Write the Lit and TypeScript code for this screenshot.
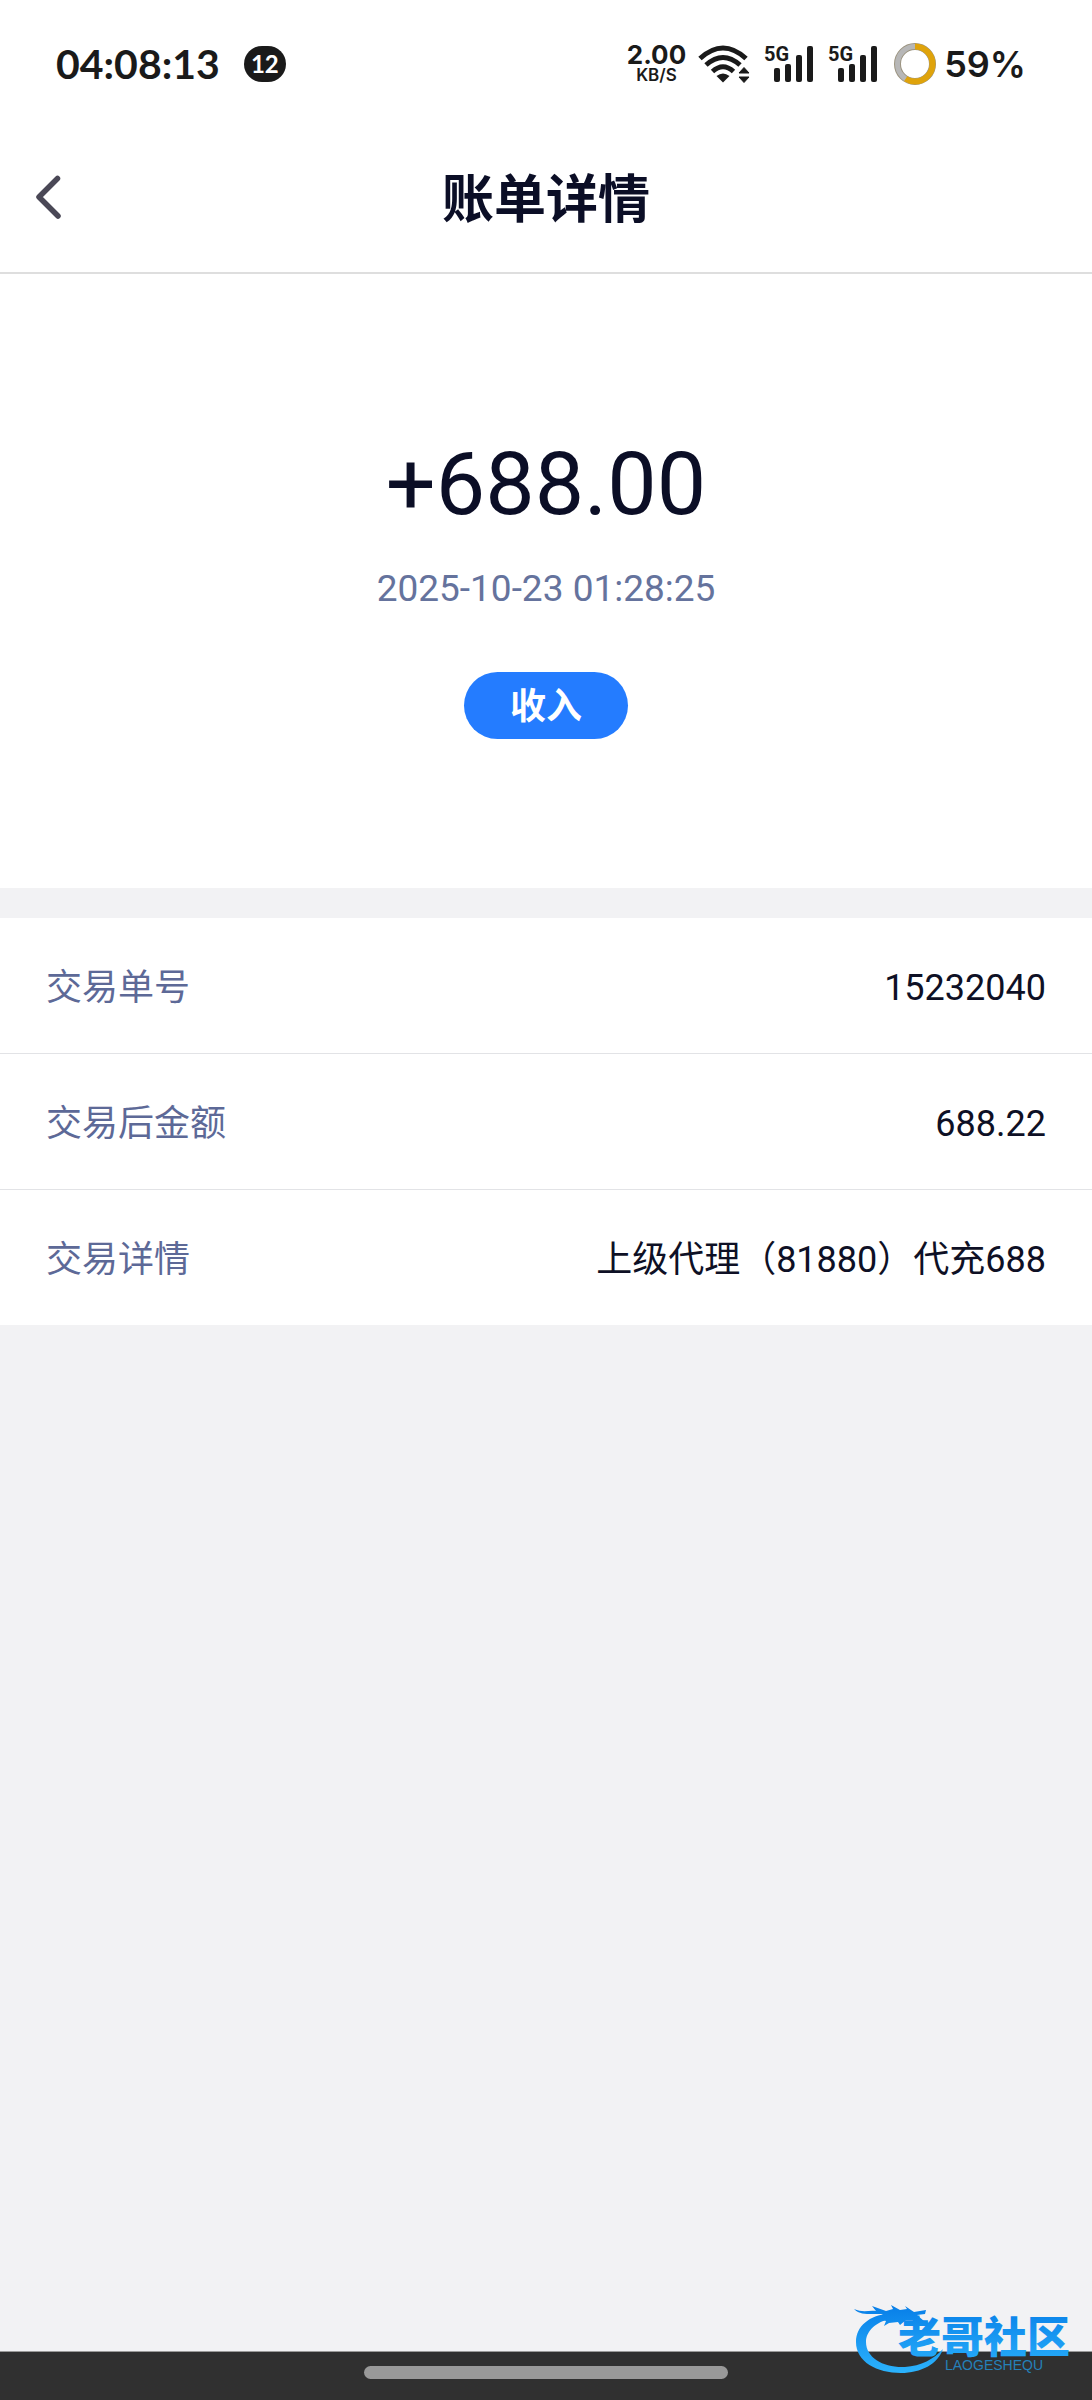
import { LitElement, html, css, svg } from "lit";
import { customElement, property } from "lit/decorators.js";

@customElement("signal-icon")
class SignalIcon extends LitElement {
  static styles = css`
    :host { display: block; }
    .signal { display: block; }
    .net { font: 700 20px Roboto, sans-serif; fill: #1a1a1a; }
  `;
  render() {
    return html`<svg class="signal" width="50" height="40" viewBox="0 0 50 40" role="img" aria-label="5G">
      <text class="net" x="0" y="17">5G</text>
      <g fill="#1a1a1a">
        <rect x="10" y="24" width="6" height="14" rx="2" />
        <rect x="21" y="20" width="6" height="18" rx="2" />
        <rect x="32" y="11" width="6" height="27" rx="2" />
        <rect x="43" y="2" width="6" height="36" rx="2" />
      </g>
    </svg>`;
  }
}

@customElement("status-bar")
class StatusBar extends LitElement {
  static styles = css`
    :host {
      display: flex;
      align-items: center;
      justify-content: space-between;
      height: 120px;
      padding: 4px 66px 0 56px;
      color: #1a1a1a;
    }
    .group { display: flex; align-items: center; }
    .time { font: 700 41px/48px Lato, sans-serif; }
    .count {
      margin-left: 24px;
      width: 42px;
      border-radius: 18px;
      background: #1a1a1a;
      color: #fff;
      text-align: center;
      font: 700 24px/36px Lato, sans-serif;
    }
    .speed { display: flex; flex-direction: column; align-items: center; font-family: Inter, sans-serif; font-weight: 700; }
    .rate { font-size: 26px; line-height: 22px; }
    .unit { font-size: 17px; line-height: 18px; font-weight: 600; }
    .wifi { display: block; margin: 0 14px 0 12px; }
    .signals { display: flex; gap: 14px; }
    .ring { display: block; margin: 0 8px 0 16px; }
    .level { font: 600 36px/48px Inter, sans-serif; }
  `;
  render() {
    return html`
      <div class="group">
        <span class="time">04:08:13</span>
        <span class="count">12</span>
      </div>
      <div class="group">
        <div class="speed"><span class="rate">2.00</span><span class="unit">KB/S</span></div>
        <svg class="wifi" width="52" height="38" viewBox="0 0 52 38" role="img" aria-label="Wi-Fi">
          <g fill="none" stroke="#1a1a1a" stroke-width="5">
            <path d="M2 13.500Q25-7.500 48 13.500" />
            <path d="M8 20Q25 5 42 20" />
            <path d="M14.500 26.500Q25 17 35.500 26.500" />
          </g>
          <path d="M18.500 31Q25 26 31.500 31L25 37.500Z" fill="#1a1a1a" />
          <path d="M41 28L46 22.500L51 28ZM41 32L46 37.500L51 32Z" fill="#1a1a1a" stroke="#1a1a1a" stroke-linejoin="round" />
        </svg>
        <div class="signals"><signal-icon></signal-icon><signal-icon></signal-icon></div>
        <svg class="ring" width="42" height="42" viewBox="0 0 42 42" role="img" aria-label="电量">
          <circle cx="21" cy="21" r="17.500" fill="none" stroke="#9b937f" stroke-width="7" />
          <circle cx="21" cy="21" r="17.500" fill="none" stroke="#b7b7b7" stroke-width="5" />
          <circle cx="21" cy="21" r="17.500" fill="none" stroke="#dfa30b" stroke-width="6"
            pathLength="100" stroke-dasharray="59 41" transform="rotate(-90 21 21)" />
        </svg>
        <span class="level">59%</span>
      </div>
    `;
  }
}

@customElement("detail-row")
class DetailRow extends LitElement {
  @property() label = "";
  @property() value = "";
  static styles = css`
    :host {
      display: flex;
      align-items: center;
      justify-content: space-between;
      gap: 24px;
      min-height: 131px;
      padding: 4px 46px 0;
      background: #fff;
      font: 400 36px/52px Roboto, "Noto Sans CJK SC", sans-serif;
    }
    .label { color: #5d6997; white-space: nowrap; }
    .value { color: #0e1025; text-align: right; }
  `;
  render() {
    return html`<span class="label">${this.label}</span><span class="value">${this.value}</span>`;
  }
}

@customElement("community-mark")
class CommunityMark extends LitElement {
  static styles = css`
    :host { display: block; }
    .mark { display: block; }
    .name { font: 900 43px "Noto Sans CJK SC", sans-serif; }
    .latin { font: 400 14px "Liberation Sans", sans-serif; fill: #2580b8; }
  `;
  render() {
    return html`<svg class="mark" width="262" height="120" viewBox="0 0 262 120" role="img" aria-label="老哥社区">
      <defs>
        <linearGradient id="blue" gradientUnits="userSpaceOnUse" x1="0" y1="26" x2="0" y2="92">
          <stop offset="0" stop-color="#087fe8" />
          <stop offset="1" stop-color="#2bb2fc" />
        </linearGradient>
      </defs>
      ${svg`<g fill="url(#blue)">
        <path d="M58 34C40 35 26 46 26 62C26 82 47 93 71 93C91 93 108 84 113 69C104 79 91 86 75 87C54 88 36 78 36 62C36 51 46 42 60 39Z" />
        <path d="M24 29C33 33 39 30 46 31L42 26L56 31L63 29L61 25L70 30L77 29L75 26L84 32L96 30L95 34L87 35L94 41L92 43L83 40L76 40L70 45L68 42L59 43L54 46L56 41L48 38L53 34L42 34C35 34 29 34 24 29Z" />
        <text class="name" x="68" y="73">老哥社区</text>
      </g>`}
      <text class="latin" x="115" y="90">LAOGESHEQU</text>
    </svg>`;
  }
}

@customElement("app-root")
class AppRoot extends LitElement {
  static styles = css`
    :host {
      display: flex;
      flex-direction: column;
      position: relative;
      min-height: 100vh;
      background: #f2f2f4;
      font-family: Roboto, "Noto Sans CJK SC", sans-serif;
      color: #0b0e26;
    }
    .header {
      display: grid;
      grid-template-columns: 96px 1fr 96px;
      align-items: center;
      height: 148px;
      background: #fff;
      border-bottom: 2px solid #dedede;
    }
    .top { background: #fff; }
    .back { display: flex; padding: 16px 32px 18px; border: 0; background: none; }
    .title { margin: 0; padding-top: 6px; text-align: center; font-size: 52px; line-height: 76px; font-weight: 700; }
    .summary {
      display: flex;
      flex-direction: column;
      align-items: center;
      padding: 158px 0 149px;
      background: #fff;
    }
    .amount { font-size: 88px; line-height: 104px; }
    .date { margin-top: 32px; font-size: 37px; line-height: 42px; color: #65739d; }
    .kind {
      margin-top: 62px;
      padding: 4px 46px 0;
      border-radius: 34px;
      background: #247cff;
      color: #fff;
      font-size: 36px;
      line-height: 63px;
      font-weight: 700;
    }
    .details { display: flex; flex-direction: column; gap: 1px; margin-top: 30px; background: #e2e3e6; }
    .nav {
      display: flex;
      justify-content: center;
      margin-top: auto;
      padding: 14px 0 21px;
      border-top: 1px solid #9a9a9a;
      background: #303030;
    }
    .handle { width: 33.3%; height: 13px; border-radius: 7px; background: #999; }
    .watermark { position: absolute; right: 0; bottom: 0; }
  `;
  private rows = [
    ["交易单号", "15232040"],
    ["交易后金额", "688.22"],
    ["交易详情", "上级代理（81880）代充688"],
  ];
  render() {
    return html`
      <status-bar class="top"></status-bar>
      <header class="header">
        <button class="back" aria-label="返回">
          <svg width="32" height="46" viewBox="0 0 32 46">
            <path d="M25.500 4.500L7 23L26 42" fill="none" stroke="#4a4856" stroke-width="5.500" stroke-linecap="round" stroke-linejoin="round" />
          </svg>
        </button>
        <h1 class="title">账单详情</h1>
      </header>
      <section class="summary">
        <span class="amount">+688.00</span>
        <time class="date">2025-10-23 01:28:25</time>
        <span class="kind">收入</span>
      </section>
      <section class="details">
        ${this.rows.map(([label, value]) => html`<detail-row .label=${label} .value=${value}></detail-row>`)}
      </section>
      <footer class="nav"><div class="handle"></div></footer>
      <community-mark class="watermark"></community-mark>
    `;
  }
}
